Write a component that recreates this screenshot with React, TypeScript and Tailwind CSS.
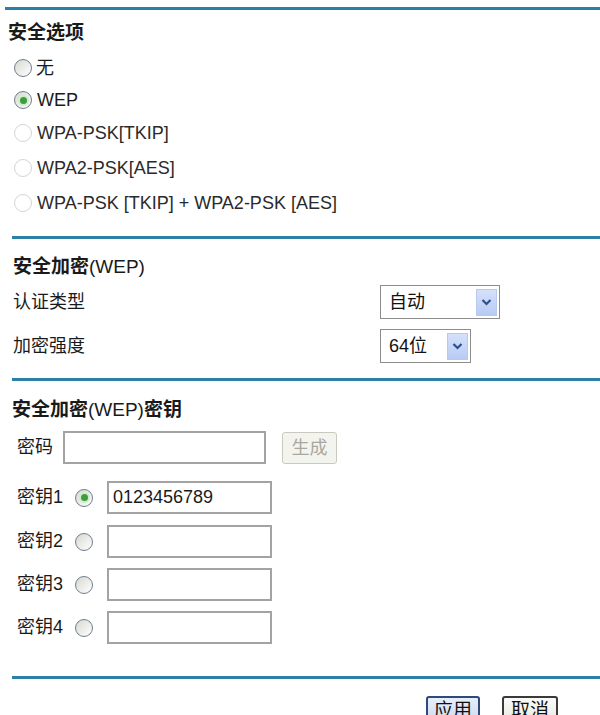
import React from "react";

function Radio({ checked = false, disabled = false }: { checked?: boolean; disabled?: boolean }) {
  return (
    <span
      className={
        disabled
          ? "inline-flex shrink-0 items-center justify-center w-[18px] h-[18px] rounded-full border border-[#d2d5d8] bg-white"
          : "inline-flex shrink-0 items-center justify-center w-[18px] h-[18px] rounded-full border border-[#6f7f90] bg-gradient-to-br from-[#d8d8d2] to-[#ffffff]"
      }
    >
      {checked && <span className="w-[7px] h-[7px] rounded-full bg-[#3e9e3e] shadow-[0_0_0_2px_#cfeccd]" />}
    </span>
  );
}

function Select({ value, width }: { value: string; width: string }) {
  return (
    <div className={`${width} h-[34px] border border-[#8c8c8c] bg-white flex items-center justify-between pl-[8px] pr-[2px]`}>
      <span className="text-[18px] text-[#111]">{value}</span>
      <span className="w-[21px] h-[27px] bg-gradient-to-b from-[#d5e1fa] to-[#b7cbf4] border border-[#b8c8ee] flex items-center justify-center">
        <svg width="11" height="8" viewBox="0 0 11 8">
          <polyline points="1.5,2 5.5,6 9.5,2" fill="none" stroke="#2f4f8f" strokeWidth="2.2" />
        </svg>
      </span>
    </div>
  );
}

function Line() {
  return <div className="ml-[12px] h-[3px] bg-[#2c80a6]" />;
}

function KeyRow({ n, checked, value, mt }: { n: number; checked?: boolean; value?: string; mt: string }) {
  return (
    <div className={`${mt} h-[33px] flex items-center pl-[17px]`}>
      <span className="w-[58px] text-[18px] text-[#1a1a1a]">密钥{n}</span>
      <Radio checked={checked} />
      <div className="ml-[14px] w-[165px] h-[33px] border-2 border-[#a3a3a3] bg-white flex items-center pl-[4px] text-[18px] text-[#1a1a1a]">
        {value}
      </div>
    </div>
  );
}

export default function App() {
  return (
    <div
      className="w-[600px] h-[715px] overflow-hidden bg-white text-[#1a1a1a]"
      style={{ fontFamily: '"Liberation Sans", "Noto Sans CJK SC", sans-serif' }}
    >
      <div className="pt-[7px]">
        <div className="ml-[5px] h-[3px] bg-[#2c80a6]" />
      </div>

      {/* 安全选项 */}
      <div className="pl-[8px] flex flex-col">
        <div className="mt-[10px] h-[26px] leading-[26px] text-[19px] font-bold">安全选项</div>
        <div className="mt-[10px] h-[24px] flex items-center pl-[6px] gap-[4px] text-[18px]">
          <Radio />
          <span>无</span>
        </div>
        <div className="mt-[8px] h-[24px] flex items-center pl-[6px] gap-[5px] text-[18px]">
          <Radio checked />
          <span>WEP</span>
        </div>
        <div className="mt-[9px] h-[24px] flex items-center pl-[6px] gap-[5px] text-[18px] text-[#2a2a2a]">
          <Radio disabled />
          <span>WPA-PSK[TKIP]</span>
        </div>
        <div className="mt-[11px] h-[24px] flex items-center pl-[6px] gap-[5px] text-[18px] text-[#2a2a2a]">
          <Radio disabled />
          <span>WPA2-PSK[AES]</span>
        </div>
        <div className="mt-[11px] h-[24px] flex items-center pl-[6px] gap-[5px] text-[18px] text-[#2a2a2a]">
          <Radio disabled />
          <span>WPA-PSK [TKIP] + WPA2-PSK [AES]</span>
        </div>
      </div>

      <div className="pt-[21px]">
        <Line />
      </div>

      {/* 安全加密(WEP) */}
      <div className="pl-[13px] flex flex-col">
        <div className="mt-[15px] h-[26px] leading-[26px] text-[19px]">
          <span className="font-bold">安全加密</span>(WEP)
        </div>
        <div className="mt-[5px] h-[34px] flex items-center">
          <span className="w-[367px] text-[18px]">认证类型</span>
          <Select value="自动" width="w-[120px]" />
        </div>
        <div className="mt-[10px] h-[34px] flex items-center">
          <span className="w-[367px] text-[18px]">加密强度</span>
          <Select value="64位" width="w-[91px]" />
        </div>
      </div>

      <div className="pt-[15px]">
        <Line />
      </div>

      {/* 安全加密(WEP)密钥 */}
      <div className="flex flex-col">
        <div className="mt-[16px] pl-[12px] h-[26px] leading-[26px] text-[19px]">
          <span className="font-bold">安全加密</span>(WEP)<span className="font-bold">密钥</span>
        </div>
        <div className="mt-[8px] h-[33px] flex items-center pl-[17px]">
          <span className="w-[46px] text-[18px]">密码</span>
          <div className="w-[203px] h-[33px] border-2 border-[#a3a3a3] bg-white" />
          <button className="ml-[16px] w-[55px] h-[32px] rounded-[3px] border border-[#c9c9c0] bg-[#f4f4ee] text-[18px] text-[#a8a8a0] leading-none">
            生成
          </button>
        </div>
        <KeyRow n={1} checked value="0123456789" mt="mt-[17px]" />
        <KeyRow n={2} mt="mt-[11px]" />
        <KeyRow n={3} mt="mt-[10px]" />
        <KeyRow n={4} mt="mt-[10px]" />
      </div>

      <div className="pt-[32px]">
        <Line />
      </div>

      <div className="pt-[17px] flex pl-[426px] gap-[22px]">
        <button className="w-[54px] h-[30px] rounded-[3px] border-2 border-[#2d4a7a] bg-gradient-to-b from-[#e9effa] to-[#c9d7f0] text-[19px] leading-[24px] text-[#111]">
          应用
        </button>
        <button className="w-[56px] h-[30px] rounded-[3px] border-2 border-[#3a3a3a] bg-gradient-to-b from-[#fbfbf8] to-[#e8e8e0] text-[19px] leading-[24px] text-[#111]">
          取消
        </button>
      </div>
    </div>
  );
}
